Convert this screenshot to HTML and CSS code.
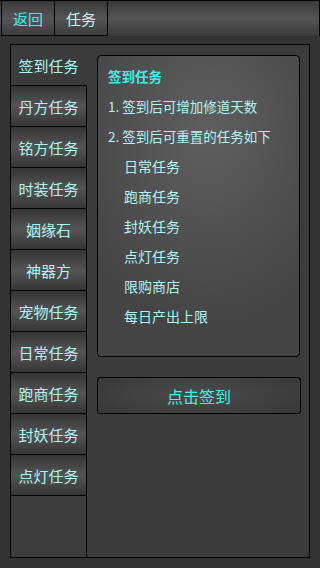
FILE: index.html
```html
<!DOCTYPE html>
<html lang="zh">
<head>
<meta charset="utf-8">
<link rel="stylesheet" href="styles.css">
</head>
<body>
<div class="topbar">
  <div class="tbtn back">返回</div>
  <div class="tbtn title">任务</div>
</div>
<div class="panel">
  <div class="tabs">
    <div class="tab active">签到任务</div>
    <div class="tab">丹方任务</div>
    <div class="tab">铭方任务</div>
    <div class="tab">时装任务</div>
    <div class="tab">姻缘石</div>
    <div class="tab">神器方</div>
    <div class="tab">宠物任务</div>
    <div class="tab">日常任务</div>
    <div class="tab">跑商任务</div>
    <div class="tab">封妖任务</div>
    <div class="tab">点灯任务</div>
    <div class="filler"></div>
  </div>
  <div class="content">
    <div class="infobox">
      <div class="line head">签到任务</div>
      <div class="line">1. 签到后可增加修道天数</div>
      <div class="line">2. 签到后可重置的任务如下</div>
      <div class="line sub">日常任务</div>
      <div class="line sub">跑商任务</div>
      <div class="line sub">封妖任务</div>
      <div class="line sub">点灯任务</div>
      <div class="line sub">限购商店</div>
      <div class="line sub">每日产出上限</div>
    </div>
    <div class="signbtn">点击签到</div>
  </div>
</div>
</body>
</html>
```
FILE: styles.css
```css
html, body {
  margin: 0;
  padding: 0;
}
body {
  width: 320px;
  height: 568px;
  background: #333333;
  font-family: "Noto Sans CJK SC", "Microsoft YaHei", sans-serif;
  overflow: hidden;
}
.topbar {
  display: flex;
  height: 35px;
  border-top: 1px solid #000;
  border-right: 1px solid #000;
  box-sizing: content-box;
  background: linear-gradient(#393939, #555555 50%, #3a3a3a);
}
.tbtn {
  width: 52px;
  height: 34px;
  border-right: 1px solid #000;
  border-bottom: 1px solid #000;
  display: flex;
  align-items: center;
  justify-content: center;
  font-size: 15px;
}
.back {
  margin-left: 1px;
  border-left: 1px solid #000;
  color: #3ef2ec;
}
.title {
  color: #c4f6f4;
}
.panel {
  margin: 8px 0 0 10px;
  width: 298px;
  height: 512px;
  border: 1px solid #000;
  background: #3b3b3b;
  display: flex;
}
.tabs {
  width: 76px;
  display: flex;
  flex-direction: column;
}
.tab {
  height: 40px;
  border-bottom: 1px solid #000;
  border-right: 1px solid #000;
  display: flex;
  align-items: center;
  justify-content: center;
  font-size: 15px;
  color: #aef4f2;
  background: linear-gradient(#343434, #545454 50%, #363636);
}
.tab.active {
  border-right: 1px solid transparent;
  background: #3b3b3b;
}
.filler {
  flex: 1;
  border-right: 1px solid #000;
  background: #3c3c3c;
}
.content {
  flex: 1;
  padding: 10px 8px 0 10px;
}
.infobox {
  width: 181px;
  height: 295px;
  padding: 5px 10px 0 10px;
  border: 1px solid #000;
  border-radius: 4px;
  background: radial-gradient(ellipse 75% 65% at 55% 25%, #5f5f5f, #444444);
}
.line {
  height: 30px;
  line-height: 30px;
  font-size: 13.5px;
  color: #b2f4f2;
  white-space: nowrap;
}
.line.head {
  font-weight: bold;
  color: #3eeee6;
}
.line.sub {
  padding-left: 16px;
  font-size: 14px;
}
.signbtn {
  margin-top: 20px;
  width: 202px;
  height: 35px;
  border: 1px solid #000;
  border-radius: 3px;
  background: radial-gradient(ellipse 70% 90% at 50% 45%, #4b4b4b, #363636);
  display: flex;
  align-items: center;
  justify-content: center;
  font-size: 16px;
  color: #3ef2ec;
}
```
